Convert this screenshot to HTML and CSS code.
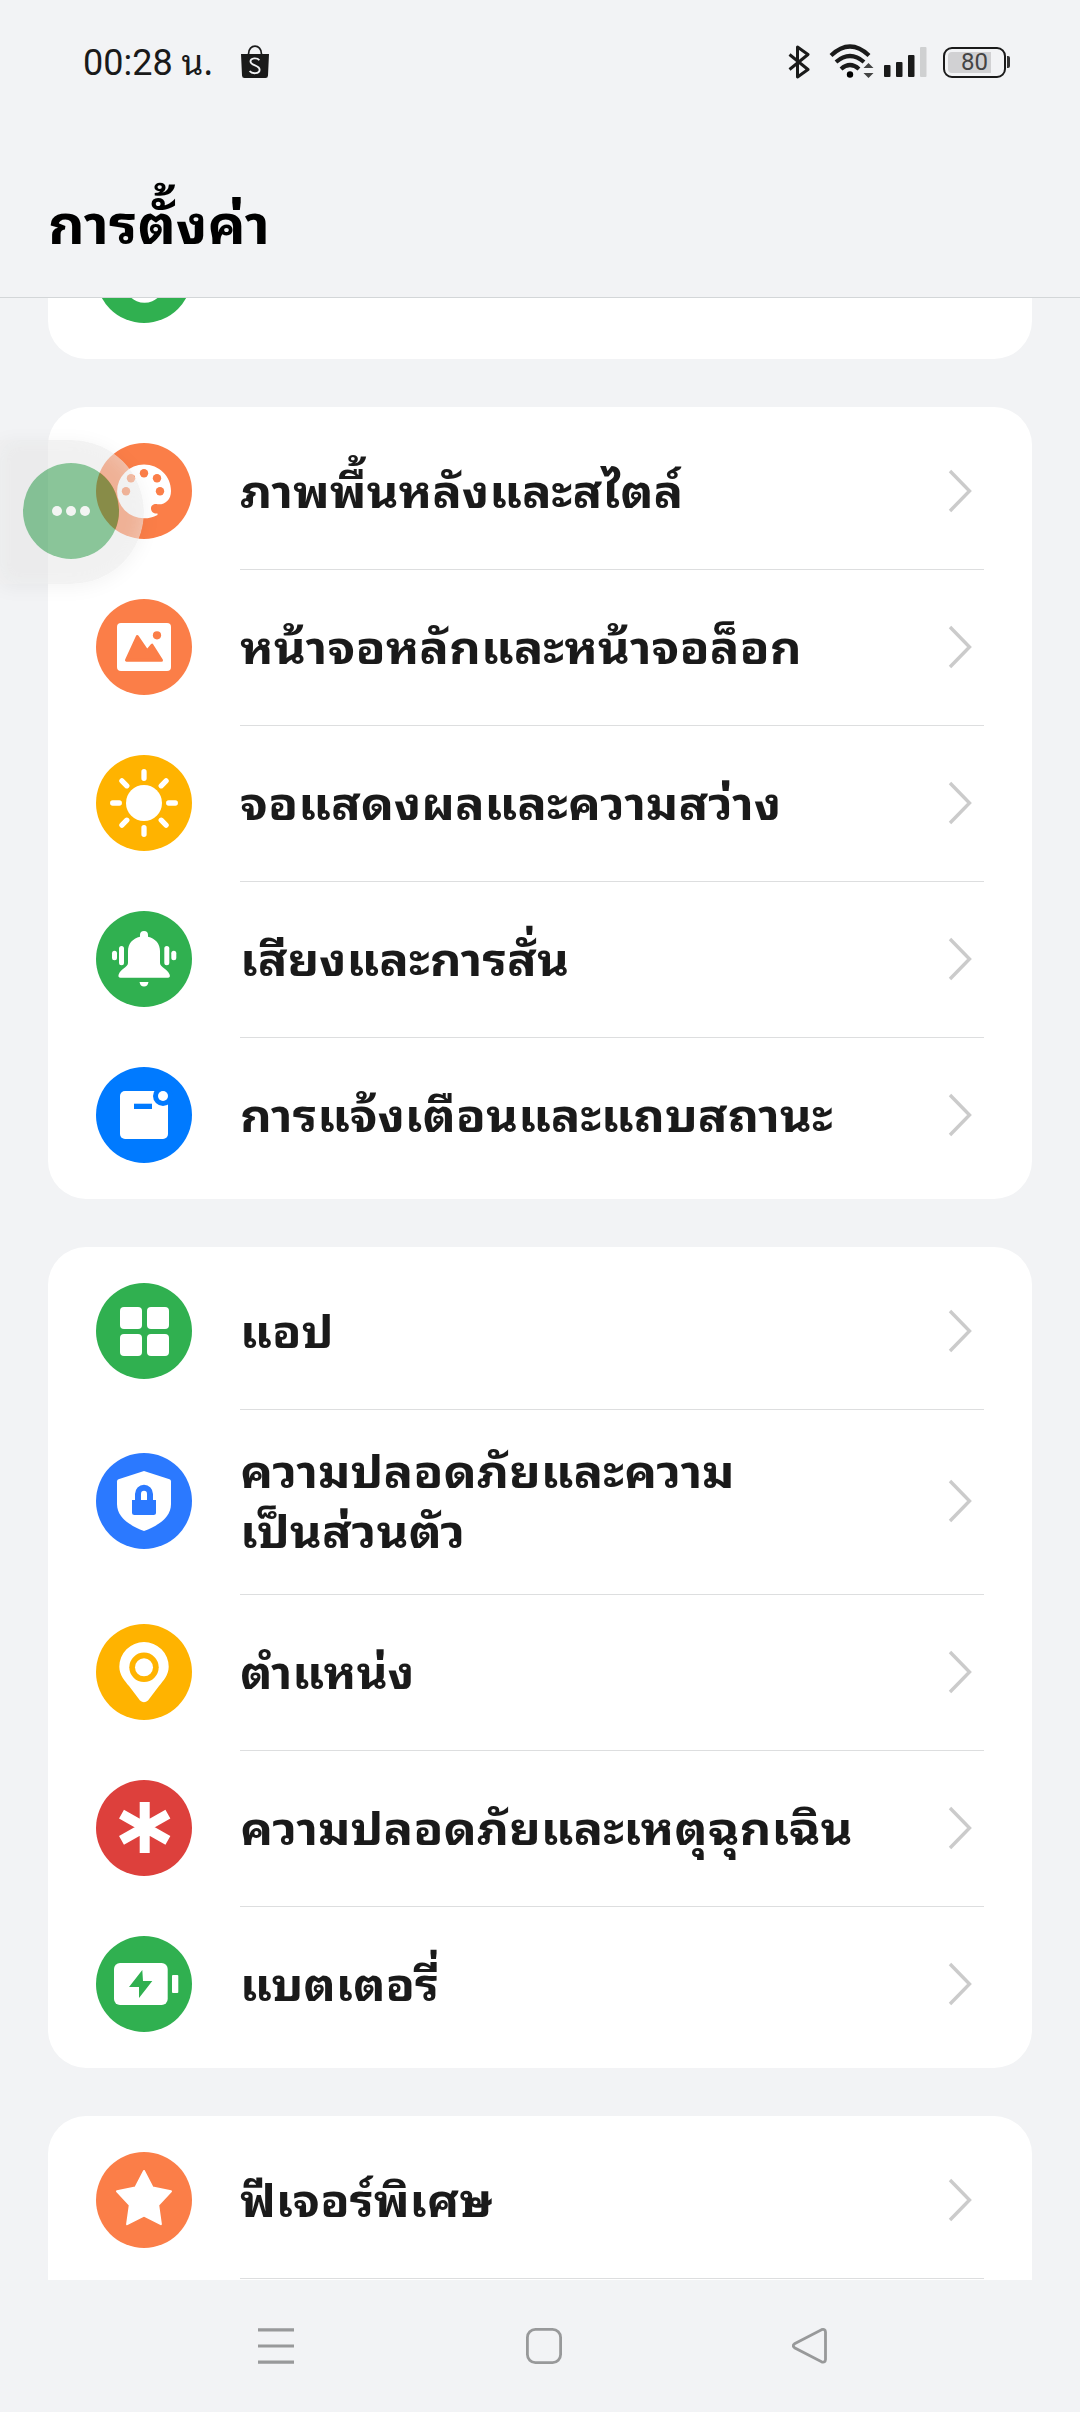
FILE: index.html
```
<!DOCTYPE html>
<html lang="th">
<head>
<meta charset="utf-8">
<title>การตั้งค่า</title>
<link rel="stylesheet" href="styles.css">
</head>
<body>
<svg width="0" height="0" class="defs"><symbol id="chev" viewBox="0 0 24 44"><path d="M2 2L21.500 22L2 42" fill="none" stroke="#cbcbcb" stroke-width="3.400"/></symbol></svg>
<div class="screen">
  <header class="status">
    <span class="time">00:28 <span class="suffix">น.</span></span>
    <svg class="bag" viewBox="0 0 30 34"><path d="M1 9h28l-1 21.500q-.1 2.500-2.500 2.500h-21q-2.400 0-2.500-2.500z" fill="#1a1a1a"/><path d="M8.500 9C8.500-1.500 21.500-1.500 21.500 9" fill="none" stroke="#1a1a1a" stroke-width="1.700"/><path d="M19.300 15.200C17.500 12.700 10.500 12.500 10.500 16.600C10.500 20.800 19.600 20.200 19.600 24.700C19.600 29 12 29.200 9.600 26" fill="none" stroke="#f2f3f5" stroke-width="1.900"/></svg>
    <div class="indicators">
      <svg class="bt" viewBox="0 0 22 34"><path d="M1.500 9.500L20 24.500L9.500 32V2L20 9.500L1.500 24.500" fill="none" stroke="#1a1a1a" stroke-width="3" stroke-linejoin="round"/></svg>
      <svg class="wifi" viewBox="0 0 46 36"><g fill="none" stroke="#1a1a1a" stroke-width="4.200"><path d="M2 12.500Q21 -5.500 40 12.500"/><path d="M7 19Q21 7 35 19"/><path d="M12 26Q21 18 30 26"/></g><circle cx="21" cy="31.500" r="3.200"/><path d="M39.500 20l5 5h-10zM39.500 35l5-5h-10z" fill="#444"/></svg>
      <svg class="signal" viewBox="0 0 43 30"><g fill="#1a1a1a"><rect y="18" width="6.500" height="12" rx="1"/><rect x="12" y="15" width="6.500" height="15" rx="1"/><rect x="24" y="8" width="6.500" height="22" rx="1"/></g><rect x="36" width="6.500" height="30" rx="1" fill="#cfd0d1"/></svg>
      <div class="battery"><span class="level"></span><span class="pct">80</span></div><i class="nub"></i>
    </div>
  </header>
  <div class="titlebar"><h1>การตั้งค่า</h1></div>
  <main class="list">
    <section class="card first">
      <div class="row"><svg class="ico green" viewBox="0 0 96 96"><circle cx="48.500" cy="55.400" r="20.300" fill="#fff"/></svg></div>
    </section>
    <section class="card">
      <div class="row"><svg class="ico orange" viewBox="0 0 96 96"><path fill="#fff" d="M48 21.500C63 21.500 75 33 75 48C75 57 69 62 61.500 61.300C58 60.500 55 62.500 55 65.500C55 69 58 71 61.500 70.500V72C57 74.500 53 75.300 48 75.300A26.900 26.900 0 0 1 48 21.500Z"/><circle cx="48" cy="30.300" r="4.200"/><circle cx="35" cy="35.300" r="4.200"/><circle cx="61" cy="35.300" r="4.200"/><circle cx="30" cy="48.300" r="4.200"/><circle cx="64" cy="48.300" r="4.200"/></svg><div class="body"><span class="label">ภาพพื้นหลังและสไตล์</span><svg class="chev"><use href="#chev"/></svg></div></div>
      <div class="row"><svg class="ico orange" viewBox="0 0 96 96"><rect x="21" y="24" width="54" height="48" rx="4" fill="#fff"/><circle cx="61" cy="36.300" r="4.100"/><path d="M41.300 37.500L30.500 61.200H65.500L56 46.200L51.200 52Z" stroke="#fb7e48" stroke-width="3" stroke-linejoin="round"/></svg><div class="body"><span class="label">หน้าจอหลักและหน้าจอล็อก</span><svg class="chev"><use href="#chev"/></svg></div></div>
      <div class="row"><svg class="ico yellow" viewBox="0 0 96 96"><circle cx="48" cy="48" r="18" fill="#fff"/><path d="M48 16.700v6.600M48 72.700v6.600M16.700 48h6.600M72.700 48h6.600M25.900 25.900l4.900 4.900M65.200 65.200l4.900 4.900M25.900 70.100l4.900-4.900M65.200 30.800l4.900-4.900" stroke="#fff" stroke-width="5.300" stroke-linecap="round"/></svg><div class="body"><span class="label">จอแสดงผลและความสว่าง</span><svg class="chev"><use href="#chev"/></svg></div></div>
      <div class="row"><svg class="ico green" viewBox="0 0 96 96"><g fill="#fff"><path d="M44 25.800V24a4 4 0 0 1 8 0v1.800C59.500 27.500 64 33 64 40V52C64 56.500 71.500 57.500 73.800 64Q74.300 66.700 72 66.700H24.500Q22 66.700 22.500 64C24.500 57.500 32 56.500 32 52V40C32 33 36.500 27.500 44 25.800Z"/><path d="M43.500 71h9q-.8 4.500-4.500 4.500t-4.500-4.500z"/><rect x="23" y="35" width="5" height="19.300" rx="2.500"/><rect x="16" y="39.700" width="5" height="9.600" rx="2.500"/><rect x="68.300" y="35" width="5" height="19.300" rx="2.500"/><rect x="75.300" y="39.700" width="5" height="9.600" rx="2.500"/></g></svg><div class="body"><span class="label">เสียงและการสั่น</span><svg class="chev"><use href="#chev"/></svg></div></div>
      <div class="row"><svg class="ico blue" viewBox="0 0 96 96"><rect x="24" y="24" width="48" height="48" rx="5" fill="#fff"/><circle cx="67" cy="29" r="10"/><circle cx="67" cy="29" r="5" fill="#fff"/><rect x="38" y="36.700" width="18" height="5.300"/></svg><div class="body"><span class="label">การแจ้งเตือนและแถบสถานะ</span><svg class="chev"><use href="#chev"/></svg></div></div>
    </section>
    <section class="card">
      <div class="row"><svg class="ico green" viewBox="0 0 96 96"><g fill="#fff"><rect x="24" y="24" width="22" height="22" rx="4"/><rect x="51" y="24" width="22" height="22" rx="4"/><rect x="24" y="51" width="22" height="22" rx="4"/><rect x="51" y="51" width="22" height="22" rx="4"/></g></svg><div class="body"><span class="label snug">แอป</span><svg class="chev"><use href="#chev"/></svg></div></div>
      <div class="row tall"><svg class="ico azure" viewBox="0 0 96 96"><path fill="#fff" d="M48 18L73.500 26.300Q75 26.800 75 28.500V51C75 63 65 71.500 48 78C31 71.500 21 63 21 51V28.500Q21 26.800 22.500 26.300Z"/><path d="M36 47H60V59.500Q60 62 57.500 62H38.500Q36 62 36 59.500Z"/><path d="M42 48V41a6 6.300 0 0 1 12 0V48" fill="none" stroke="#2b79ff" stroke-width="6"/></svg><div class="body"><span class="label">ความปลอดภัยและความ<br>เป็นส่วนตัว</span><svg class="chev"><use href="#chev"/></svg></div></div>
      <div class="row"><svg class="ico yellow" viewBox="0 0 96 96"><path fill="#fff" d="M48 18A24.700 24.700 0 0 1 72.700 42.700C72.700 51 67 57 63 62L52 76.500Q48 80 44 76.500L33 62C29 57 23.300 51 23.300 42.700A24.700 24.700 0 0 1 48 18Z"/><circle cx="48" cy="43.300" r="14.700"/><circle cx="48" cy="43.300" r="9" fill="#fff"/></svg><div class="body"><span class="label snug">ตำแหน่ง</span><svg class="chev"><use href="#chev"/></svg></div></div>
      <div class="row"><svg class="ico red" viewBox="0 0 96 96"><path d="M48.700 22V73M25.500 34.200L71.900 60.400M71.900 34.200L25.500 60.400" stroke="#fff" stroke-width="10"/></svg><div class="body"><span class="label">ความปลอดภัยและเหตุฉุกเฉิน</span><svg class="chev"><use href="#chev"/></svg></div></div>
      <div class="row"><svg class="ico green" viewBox="0 0 96 96"><rect x="18" y="27" width="53.700" height="42" rx="6" fill="#fff"/><rect x="76" y="39" width="6.300" height="18" rx="1" fill="#fff"/><path d="M46.300 34L33 51H43V62L56.300 45H47Z"/></svg><div class="body"><span class="label snug">แบตเตอรี่</span><svg class="chev"><use href="#chev"/></svg></div></div>
    </section>
    <section class="card">
      <div class="row"><svg class="ico orange" viewBox="0 0 96 96"><path d="M48 19L56.700 35.600L75 39.300L62.200 53L64.900 72.200L48 63.700L31.100 72.200L33.800 53L21 39.300L39.300 35.600Z" fill="#fff" stroke="#fff" stroke-width="2" stroke-linejoin="round"/></svg><div class="body"><span class="label snug">ฟีเจอร์พิเศษ</span><svg class="chev"><use href="#chev"/></svg></div></div>
      <div class="row"><div class="body blank"></div></div>
    </section>
  </main>
  <nav class="navbar">
    <svg viewBox="0 0 36 36"><path d="M0 1.800H36M0 18H36M0 34.200H36" stroke="#98999a" stroke-width="3.200"/></svg>
    <svg class="home" viewBox="0 0 36 36"><rect x="1.400" y="1.400" width="33.200" height="33.200" rx="8" fill="none" stroke="#98999a" stroke-width="2.800"/></svg>
    <svg viewBox="0 0 36 36"><path d="M2.500 15.800L29.500 1.700Q33.300 0.500 33.500 4V31.500Q33.300 35 29.500 33.800L2.500 19.700Q0 17.700 2.500 15.800Z" fill="none" stroke="#98999a" stroke-width="2.800"/></svg>
  </nav>
  <div class="assist"><div class="bubble"><i></i><i></i><i></i></div></div>
</div>
</body>
</html>
```
FILE: styles.css
```
* { box-sizing: border-box; }
body { margin: 0; background: #f2f3f5; font-family: "Noto Sans Thai Looped", "Noto Sans", sans-serif; color: #1a1a1a; }
.defs { display: none; }
.screen { position: relative; width: 1080px; height: 2412px; overflow: hidden; display: flex; flex-direction: column; }
.status { height: 124px; padding: 0 70px 0 83px; display: flex; align-items: center; flex: none; }
.time { font: 36px/40px Roboto, "Noto Sans Thai Looped", sans-serif; white-space: nowrap; width: 157px; }
.suffix { font-family: "Noto Sans Thai Looped", Roboto, sans-serif; font-size: 35px; line-height: 36px; }
.bag { width: 30px; height: 34px; }
.indicators { margin-left: auto; display: flex; align-items: center; }
.bt { width: 22px; height: 34px; margin-right: 19px; margin-top: -1px; }
.wifi { width: 46px; height: 36px; margin-top: -2px; margin-right: 9px; }
.signal { width: 43px; height: 30px; margin-right: 16px; }
.battery { position: relative; width: 63px; height: 31px; border: 2px solid #1a1a1a; border-radius: 9px; display: flex; align-items: center; justify-content: center; }
.level { position: absolute; left: 3px; top: 3px; width: 43px; height: 21px; background: #d1d1d3; border-radius: 4px 0 0 4px; }
.pct { position: relative; font: 24px/27px Roboto, sans-serif; color: #444; }
.nub { width: 3px; height: 12px; background: #333; border-radius: 0 2px 2px 0; margin-left: 1px; }
.titlebar { height: 174px; flex: none; border-bottom: 1px solid #d3d6d8; padding: 60px 0 0 48px; }
h1 { margin: 0; font-size: 54px; line-height: 72px; font-weight: 700; color: #000; transform: scaleX(1.053); transform-origin: 0 50%; }
.list { height: 1982px; flex: none; overflow: hidden; padding: 0 48px; display: flex; flex-direction: column; gap: 48px; }
.card { flex: none; background: #fff; border-radius: 38px; padding: 6px 48px; }
.first { margin-top: -107px; }
.row { height: 156px; display: flex; align-items: center; gap: 48px; }
.tall { height: 185px; padding-bottom: 1px; }
.ico { width: 96px; height: 96px; border-radius: 50%; flex: none; }
.green { background: #30b050; fill: #30b050; }
.orange { background: #fb7e48; fill: #fb7e48; }
.yellow { background: #ffb300; fill: #ffb300; }
.blue { background: #007aff; fill: #007aff; }
.azure { background: #2b79ff; fill: #2b79ff; }
.red { background: #dd403c; fill: #dd403c; }
.body { flex: 1; align-self: stretch; display: flex; align-items: center; justify-content: space-between; padding-right: 12px; }
.row + .row .body { box-shadow: inset 0 1px #dddedf; }
.blank { margin-left: 144px; }
.label { font-size: 46px; line-height: 60px; font-weight: 700; padding-bottom: 8px; white-space: nowrap; transform: scaleX(1.068); transform-origin: 0 50%; }
.snug { transform: scaleX(1.043); }
.chev { width: 24px; height: 44px; flex: none; }
.navbar { height: 132px; padding: 0 252px 0 258px; display: flex; align-items: center; justify-content: space-between; }
.navbar svg { width: 36px; height: 36px; }
.navbar .home { margin-left: 2px; }
.assist { position: absolute; left: 0; top: 440px; width: 144px; height: 144px; border-radius: 0 72px 72px 0; box-shadow: 0 3px 20px rgba(0, 0, 0, .05); }
.assist::before { content: ""; position: absolute; inset: 0; border-radius: inherit; background: rgba(228, 228, 228, .5); box-shadow: inset 0 0 20px rgba(255, 255, 255, .3); -webkit-mask: radial-gradient(circle at 71px 71px, transparent 47.500px, #000 48.500px); }
.bubble { position: absolute; left: 23px; top: 23px; width: 96px; height: 96px; border-radius: 50%; background: rgba(45, 150, 72, .555); display: flex; align-items: center; justify-content: center; gap: 4px; }
.bubble i { width: 10px; height: 10px; border-radius: 50%; background: #f3f5f3; }
```
